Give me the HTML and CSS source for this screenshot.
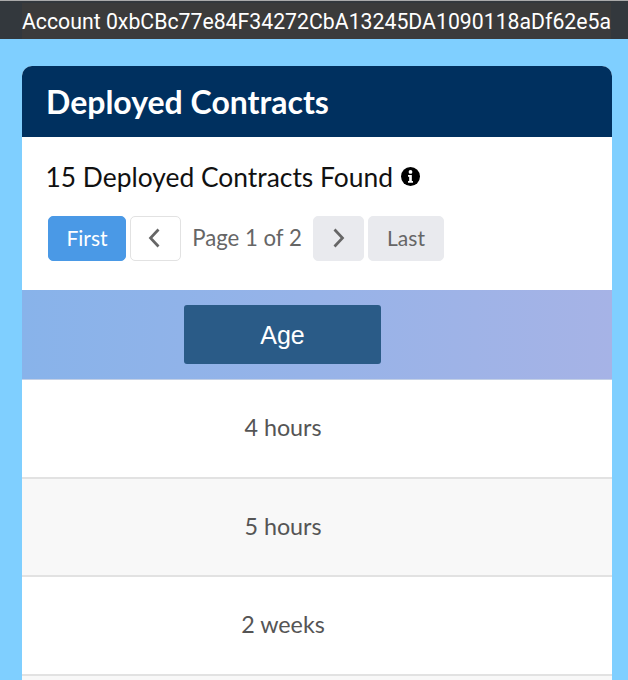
FILE: index.html
```html
<!DOCTYPE html>
<html lang="en">
<head>
    <meta charset="UTF-8">
    <meta name="viewport" content="width=device-width, initial-scale=1.0">
    <title>Deployed Contracts</title>
    <link rel="stylesheet" href="styles.css">
</head>
<body>
    <div class="account-bar">
        <div class="account-text">Account 0xbCBc77e84F34272CbA13245DA1090118aDf62e5a</div>
    </div>

    <div class="card">
        <div class="card-header">
            <h1>Deployed Contracts</h1>
        </div>
        <div class="summary">
            <h2>15 Deployed Contracts Found</h2>
            <svg class="info-icon" viewBox="0 0 20 20" aria-hidden="true">
                <circle cx="10" cy="10" r="10" fill="#000"/>
                <circle cx="10" cy="5.2" r="2" fill="#fff"/>
                <path d="M7.4 8.3h4v6.4h1.2v1.9H7.4v-1.9h1.2v-4.5H7.4z" fill="#fff"/>
            </svg>
        </div>
        <div class="pager">
            <button class="page-btn page-btn-active btn-first">First</button>
            <button class="page-btn btn-arrow">
                <svg viewBox="0 0 16 24" aria-hidden="true"><path d="M10.5 3.5 2.5 12l8 8.5" fill="none" stroke="#666" stroke-width="2.7"/></svg>
            </button>
            <span class="page-label">Page 1 of 2</span>
            <button class="page-btn page-btn-muted btn-arrow">
                <svg viewBox="0 0 16 24" aria-hidden="true"><path d="M3.5 3.5l8 8.5-8 8.5" fill="none" stroke="#666" stroke-width="2.7"/></svg>
            </button>
            <button class="page-btn page-btn-muted btn-last">Last</button>
        </div>
        <div class="table-head">
            <div class="age-head">Age</div>
        </div>
        <div class="row">4 hours</div>
        <div class="row row-alt">5 hours</div>
        <div class="row">2 weeks</div>
        <div class="row-end"></div>
    </div>
</body>
</html>
```
FILE: styles.css
```css
html, body {
    height: 100%;
}
body {
    margin: 0;
    background-color: #7fcfff;
    font-family: Lato, "Noto Sans", Arial, sans-serif;
    overflow: hidden;
}
.account-bar {
    height: 36px;
    padding: 2px 17px 0 22px;
    border-top: 1px solid #aaa;
    background-color: #33383d;
}
.account-text {
    height: 36px;
    line-height: 38px;
    background-color: #3b3b3b;
    color: #fff;
    font-family: Roboto, Arial, sans-serif;
    font-size: 21.25px;
    white-space: nowrap;
}
.card {
    margin: 27px 16px 0 22px;
    background: #fff;
    border-radius: 10px 10px 0 0;
}
.card-header {
    height: 71px;
    display: flex;
    align-items: center;
    padding-left: 24px;
    background-color: #00305f;
    border-radius: 10px 10px 0 0;
}
h1 {
    margin: 0;
    color: #fff;
    font-size: 32px;
    font-weight: 700;
}
.summary {
    display: flex;
    align-items: center;
    gap: 8px;
    height: 79px;
    padding-left: 23.5px;
}
h2 {
    margin: 0;
    color: #111;
    font-size: 26.4px;
    font-weight: 400;
}
.info-icon {
    width: 19px;
    height: 19px;
}
.pager {
    display: flex;
    align-items: flex-start;
    gap: 4px;
    padding-left: 26px;
    height: 74px;
}
.page-btn {
    height: 45px;
    padding: 0 0 2px;
    border: 1px solid #e2e2e2;
    border-radius: 5px;
    background: #fff;
    color: #666;
    font-family: inherit;
    font-size: 21px;
}
.page-btn svg {
    width: 16px;
    height: 24px;
    display: block;
    margin: 0 auto;
}
.page-btn-active {
    background-color: #4a99e6;
    border-color: #4a99e6;
    color: #fff;
}
.page-btn-muted {
    background-color: #e9eaee;
    border-color: #e9eaee;
}
.btn-first {
    width: 78px;
}
.btn-arrow {
    width: 51px;
}
.btn-last {
    width: 76px;
}
.page-label {
    width: 124px;
    line-height: 43px;
    text-align: center;
    color: #666;
    font-size: 22.2px;
}
.table-head {
    height: 89px;
    display: flex;
    align-items: center;
    padding-left: 162px;
    background: linear-gradient(90deg, #88b3ea, #a6b3e6);
    border-bottom: 1px solid #c3d0e6;
}
.age-head {
    width: 197px;
    height: 59px;
    line-height: 60px;
    text-align: center;
    border-radius: 3px;
    background-color: #2a5b87;
    color: #fff;
    font-family: "Liberation Sans", Arial, sans-serif;
    font-size: 25px;
}
.row {
    height: 96.5px;
    line-height: 95px;
    padding-right: 68px;
    text-align: center;
    border-bottom: 2px solid #e2e2e2;
    color: #555;
    font-size: 23.3px;
}
.row-alt {
    background-color: #f8f8f8;
}
.row-end {
    height: 5px;
    background-color: #f8f8f8;
}
```
